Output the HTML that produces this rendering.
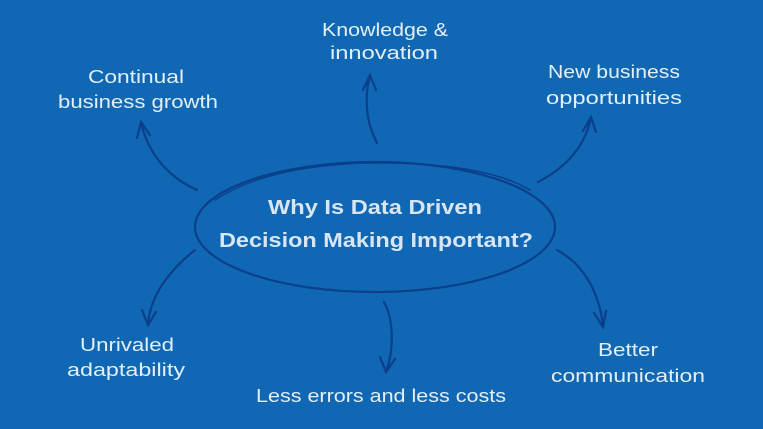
<!DOCTYPE html>
<html><head><meta charset="utf-8"><style>
html,body{margin:0;padding:0;background:#1068b5;}
svg{display:block}
text{font-family:"Liberation Sans",sans-serif;fill:#e4eef8;font-size:18px}
.t{font-weight:bold;font-size:20px;fill:#d8e6f4}
</style></head><body>
<svg width="763" height="429" viewBox="0 0 763 429" xmlns="http://www.w3.org/2000/svg">
<rect width="763" height="429" fill="#1068b5"/>
<g fill="none" stroke="#0b3f8a" stroke-width="2.2" stroke-linecap="round">
<ellipse cx="375" cy="227" rx="180" ry="65"/>
<path d="M215 200 C 260 170, 330 162, 390 163 C 450 164, 500 172, 530 190" stroke-width="1.4"/>
<path d="M377 143 C 366 122, 364 98, 370 75"/><path d="M363 90 L370 75 L376 90"/>
<path d="M197 190 C 170 178, 148 155, 141 122"/><path d="M137 138 L141 122 L150 135"/>
<path d="M538 182 C 565 168, 585 148, 591 117"/><path d="M583 131 L591 117 L596 132"/>
<path d="M195 250 C 170 270, 150 295, 148 325"/><path d="M142 310 L148 325 L156 312"/>
<path d="M384 302 C 394 320, 394 350, 386 372"/><path d="M380 357 L386 372 L395 359"/>
<path d="M557 250 C 585 265, 600 295, 603 327"/><path d="M594 313 L603 327 L606 311"/>
</g>
<g text-anchor="middle">
<text x="385" y="36" textLength="126" lengthAdjust="spacingAndGlyphs">Knowledge &amp;</text>
<text x="384" y="59" textLength="108" lengthAdjust="spacingAndGlyphs">innovation</text>
<text x="136" y="83" textLength="96" lengthAdjust="spacingAndGlyphs">Continual</text>
<text x="138" y="108" textLength="160" lengthAdjust="spacingAndGlyphs">business growth</text>
<text x="614" y="78" textLength="132" lengthAdjust="spacingAndGlyphs">New business</text>
<text x="614" y="104" textLength="136" lengthAdjust="spacingAndGlyphs">opportunities</text>
<text class="t" x="375" y="214" textLength="214" lengthAdjust="spacingAndGlyphs">Why Is Data Driven</text>
<text class="t" x="376" y="247" textLength="314" lengthAdjust="spacingAndGlyphs">Decision Making Important?</text>
<text x="127" y="351" textLength="94" lengthAdjust="spacingAndGlyphs">Unrivaled</text>
<text x="126" y="376" textLength="118" lengthAdjust="spacingAndGlyphs">adaptability</text>
<text x="381" y="402" textLength="250" lengthAdjust="spacingAndGlyphs">Less errors and less costs</text>
<text x="628" y="356" textLength="60" lengthAdjust="spacingAndGlyphs">Better</text>
<text x="628" y="382" textLength="154" lengthAdjust="spacingAndGlyphs">communication</text>
</g>
</svg>
</body></html>
